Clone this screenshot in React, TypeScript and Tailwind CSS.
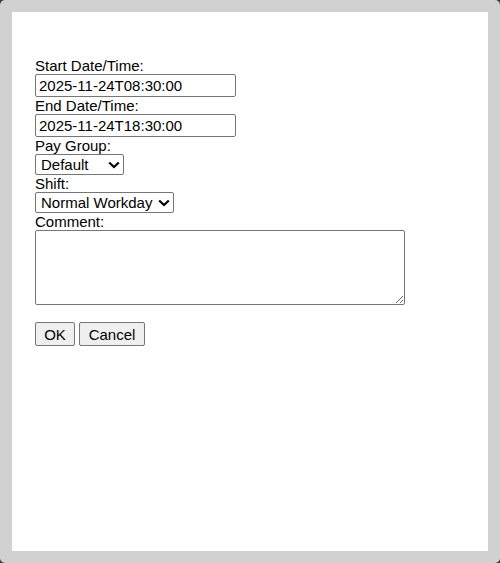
import React from "react";

function Chevron() {
  return (
    <svg
      className="pointer-events-none absolute right-[4px] top-1/2 -translate-y-1/2"
      width="12"
      height="8"
      viewBox="0 0 12 8"
      fill="none"
    >
      <path d="M1.2 1.5 L6 6 L10.8 1.5" stroke="#000" strokeWidth="2.2" strokeLinecap="butt" strokeLinejoin="miter" />
    </svg>
  );
}

export default function App() {
  const label = "block leading-[normal] text-black";
  return (
    <div className="h-[563px] w-[500px] bg-[#3a3a3a]" style={{ fontFamily: '"Liberation Sans", Arial, sans-serif' }}>
      <div className="h-full w-full rounded-[5px] bg-[#d1d1d1] p-[12px]">
        <div className="h-full w-full bg-white pl-[23px] pt-[45px] text-[15px] text-black">
          <label className={label}>Start Date/Time:</label>
          <input
            className="block h-[23px] w-[201px] rounded-[2px] border border-[#767676] px-[3px] leading-[normal] text-black outline-none"
            defaultValue="2025-11-24T08:30:00"
          />
          <label className={label}>End Date/Time:</label>
          <input
            className="block h-[23px] w-[201px] rounded-[2px] border border-[#767676] px-[3px] leading-[normal] text-black outline-none"
            defaultValue="2025-11-24T18:30:00"
          />
          <label className={label}>Pay Group:</label>
          <div className="relative h-[21px] w-[89px]">
            <select className="block h-[21px] w-[89px] appearance-none rounded-[2px] border border-[#767676] bg-white pl-[5px] leading-[normal] text-black outline-none">
              <option>Default</option>
            </select>
            <Chevron />
          </div>
          <label className={label}>Shift:</label>
          <div className="relative h-[21px] w-[139px]">
            <select className="block h-[21px] w-[139px] appearance-none rounded-[2px] border border-[#767676] bg-white pl-[5px] leading-[normal] text-black outline-none">
              <option>Normal Workday</option>
            </select>
            <Chevron />
          </div>
          <label className={label}>Comment:</label>
          <textarea className="block h-[75px] w-[370px] resize rounded-[2px] border border-[#767676] px-[2px] leading-[normal] outline-none" />
          <div className="h-[17px]" />
          <div className="flex gap-[4px]">
            <button className="h-[24px] w-[40px] rounded-[2px] border border-[#767676] bg-[#efefef] leading-[normal] text-black">
              OK
            </button>
            <button className="h-[24px] w-[66px] rounded-[2px] border border-[#767676] bg-[#efefef] leading-[normal] text-black">
              Cancel
            </button>
          </div>
        </div>
      </div>
    </div>
  );
}
